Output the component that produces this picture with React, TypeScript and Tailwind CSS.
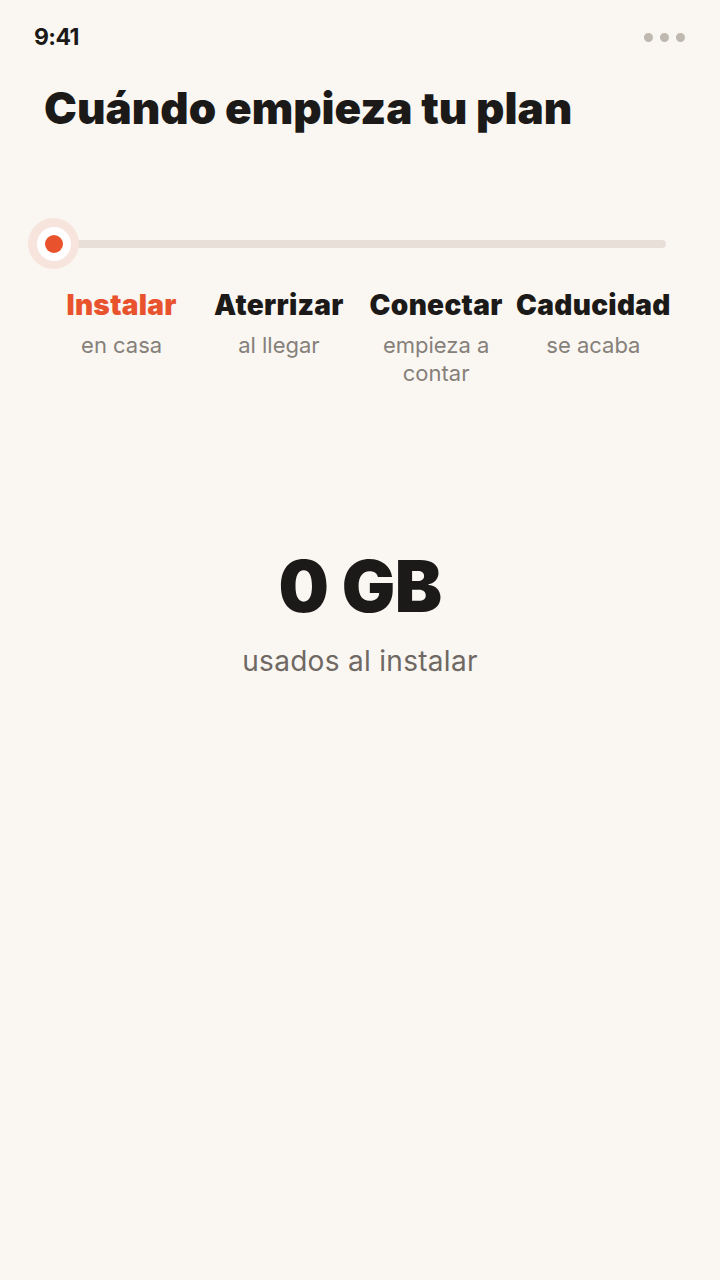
import React from "react";

const steps = [
  { t: "Instalar", s: "en casa", active: true },
  { t: "Aterrizar", s: "al llegar" },
  { t: "Conectar", s: "empieza a contar" },
  { t: "Caducidad", s: "se acaba" },
];

export default function App() {
  return (
    <div className="w-[720px] h-[1280px] bg-[#faf7f2] flex flex-col" style={{ fontFamily: "Inter, 'Liberation Sans', sans-serif" }}>
      <div className="flex items-center justify-between pl-[34px] pr-[35px] pt-[24px] h-[50px]">
        <span className="text-[23px] font-bold text-[#1c1a19] tracking-[-0.6px]">9:41</span>
        <div className="flex gap-[7px]">
          <span className="w-[9px] h-[9px] rounded-full bg-[#bfb8b1]" />
          <span className="w-[9px] h-[9px] rounded-full bg-[#bfb8b1]" />
          <span className="w-[9px] h-[9px] rounded-full bg-[#bfb8b1]" />
        </div>
      </div>
      <h1 className="mt-[30px] pl-[44px] text-[44px] font-black text-[#1c1a19] tracking-[0px] leading-[56px]">
        Cuándo empieza tu plan
      </h1>
      <div className="mt-[82px] pl-[28px] pr-[54px] flex items-center">
        <div className="relative w-[51px] h-[51px] rounded-full bg-[#f7e4dd] flex items-center justify-center shrink-0 z-10">
          <div className="w-[34px] h-[34px] rounded-full bg-white flex items-center justify-center">
            <div className="w-[18px] h-[18px] rounded-full bg-[#e8532e]" />
          </div>
        </div>
        <div className="flex-1 h-[8px] rounded-full bg-[#e8e0d8] -ml-[8px]" />
      </div>
      <div className="mt-[18px] pl-[43px] grid grid-cols-4 w-[672px]">
        {steps.map((st) => (
          <div key={st.t} className="flex flex-col items-center text-center">
            <span className={`text-[28px] font-black tracking-[0.3px] leading-[36px] whitespace-nowrap ${st.active ? "text-[#e8532e]" : "text-[#1c1a19]"}`}>
              {st.t}
            </span>
            <span className="mt-[8px] text-[22px] text-[#86807a] leading-[28px] w-[130px]">{st.s}</span>
          </div>
        ))}
      </div>
      <div className="mt-[159px] flex flex-col items-center">
        <span className="text-[71px] font-black text-[#1c1a19] tracking-[-0.6px] leading-[80px]">0 GB</span>
        <span className="mt-[18px] text-[28px] text-[#6f6863] tracking-[0.3px] leading-[34px]">usados al instalar</span>
      </div>
    </div>
  );
}
